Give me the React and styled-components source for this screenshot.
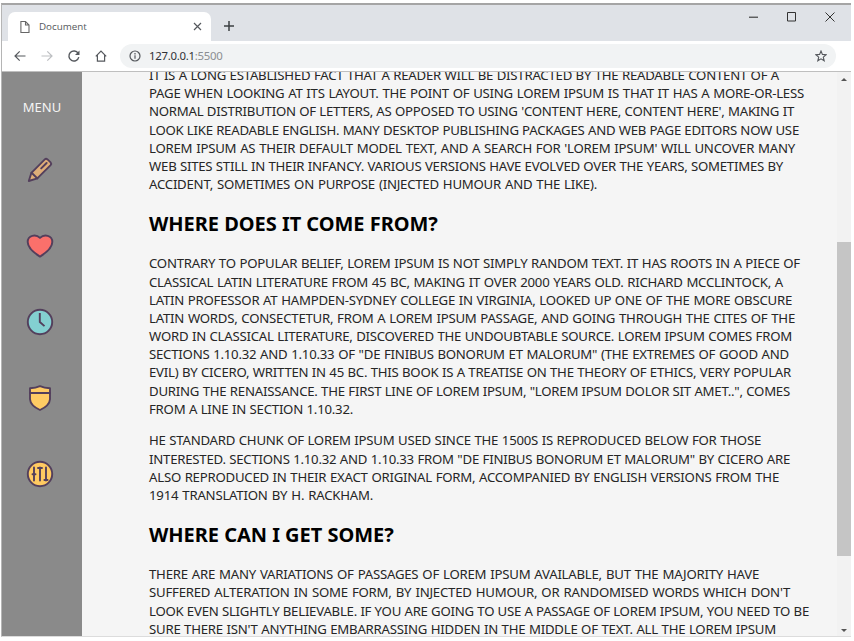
import React from "react";
import styled, { createGlobalStyle } from "styled-components";

const Global = createGlobalStyle`
  * { box-sizing: border-box; }
  body { margin: 0; background: #fff; font-family: "Noto Sans", "Open Sans", sans-serif; overflow: hidden; }
  svg { display: block; flex: none; }
`;

const Window = styled.div`
  width: 854px;
  height: 641px;
  padding: 3px 3px 4px 1px;
  background: #fff;
`;

const Browser = styled.div`
  display: flex;
  flex-direction: column;
  height: 634px;
  border-top: 2px solid #a5a5a5;
  border-left: 1px solid #b5b5b5;
  border-bottom: 1px solid #dcdcdc;
`;

const TabStrip = styled.header`
  display: flex;
  align-items: flex-end;
  height: 36px;
  flex: none;
  padding-left: 6px;
  background: #dfe2e7;
`;

const Tab = styled.div`
  display: flex;
  align-items: center;
  width: 203px;
  height: 29px;
  padding: 0 9px 0 10px;
  border-radius: 7px 7px 0 0;
  background: #fff;
`;

const TabTitle = styled.span`
  flex: 1;
  margin-left: 7px;
  font-family: "Open Sans", sans-serif;
  font-size: 9.8px;
  line-height: 14px;
  color: #55585c;
`;

const NewTab = styled.div`
  margin: 0 0 9px 12px;
`;

const WindowControls = styled.div`
  display: flex;
  align-items: center;
  gap: 28px;
  margin-left: auto;
  margin-right: 16px;
  height: 36px;
  padding-bottom: 12px;
`;

const Toolbar = styled.div`
  display: flex;
  align-items: center;
  height: 31px;
  flex: none;
  padding: 0 15px 1px 11px;
  border-bottom: 1px solid #bfbfbf;
  background: #fff;
`;

const NavButtons = styled.nav`
  display: flex;
  gap: 13px;
  width: 107px;
  flex: none;
`;

const AddressBar = styled.div`
  display: flex;
  flex: 1;
  align-items: center;
  height: 24px;
  padding: 0 9px 0 9px;
  border-radius: 12px;
  background: #f1f3f4;
`;

const Url = styled.span`
  flex: 1;
  margin-left: 8px;
  font-size: 11.4px;
  letter-spacing: -0.27px;
  line-height: 16px;
  color: #303236;
`;

const Port = styled.span`
  color: #8b8e92;
`;

const Viewport = styled.div`
  display: flex;
  flex: 1;
  min-height: 0;
  background: #f5f5f5;
`;

const Sidebar = styled.aside`
  display: flex;
  flex-direction: column;
  align-items: center;
  width: 80px;
  flex: none;
  padding: 25px 5px 0 0;
  background: #8a8a8a;
`;

const MenuLabel = styled.div`
  height: 20px;
  margin-left: 5px;
  font-size: 13px;
  line-height: 20px;
  color: #f5f5f5;
  margin-bottom: 39px;
`;

const MenuIcon = styled.div`
  height: 28px;
  margin-bottom: 48px;
`;

const Content = styled.main`
  flex: 1;
  min-width: 0;
  overflow: hidden;
  padding-left: 67px;
`;

const Paragraph = styled.div`
  margin: ${(p) => p.$top}px 0 0;
  font-size: 13.2px;
  line-height: 18.2px;
  color: #262626;
`;

const Line = styled.div`
  width: ${(p) => p.$width}px;
  height: 18.2px;
  white-space: nowrap;
  text-align: justify;
  text-align-last: justify;
  letter-spacing: -0.23px;
`;

const Heading = styled.h2`
  margin: 16.5px 0 0;
  height: 28px;
  font-size: 20px;
  line-height: 28px;
  font-weight: 700;
  white-space: nowrap;
  letter-spacing: -0.03px;
  color: #000;
`;

const Scrollbar = styled.div`
  display: flex;
  flex-direction: column;
  align-items: center;
  width: 14px;
  flex: none;
  padding: 6px 0 4px;
  background: #f2f2f2;
`;

const Thumb = styled.div`
  width: 14px;
  height: 314px;
  margin: 161px 0 auto;
  background: #c5c5c5;
`;

const Arrow = styled.div`
  width: 0;
  height: 0;
  border: 3px solid transparent;
  border-top-width: ${(p) => (p.$down ? 3 : 0)}px;
  border-bottom-width: ${(p) => (p.$down ? 0 : 3)}px;
  border-top-color: ${(p) => (p.$down ? "#555" : "transparent")};
  border-bottom-color: ${(p) => (p.$down ? "transparent" : "#555")};
`;

const Glyph = ({ size = 14, box = 14, color = "#55585d", weight = 1.2, children }) => (
  <svg width={size} height={size} viewBox={`0 0 ${box} ${box}`} fill="none" stroke={color} strokeWidth={weight}>
    {children}
  </svg>
);

const ink = "#533f5c";
const Art = ({ children }) => (
  <svg width="28" height="28" viewBox="0 0 28 28" stroke={ink} strokeWidth="1.9" strokeLinecap="round" strokeLinejoin="round" fill="none">
    {children}
  </svg>
);

const icons = [
  <Art key="pencil">
    <path d="M2.8 25 5.4 16.8 18.8 3.4Q20 2.2 21.5 3.4L24.6 6.4Q25.8 7.8 24.6 9.2L11.3 22.4Z" fill="#dfad78" />
    <path d="M5.6 16.8 11.3 22.4M15.2 12.4 20.6 7" strokeWidth="2" />
  </Art>,
  <Art key="heart">
    <path d="M14 24.6C9 21.5 1.7 15.5 1.7 10C1.7 3.2 9.8 1.8 14 5.9C18.2 1.8 26.3 3.2 26.3 10C26.3 15.5 19 21.5 14 24.6Z" fill="#fa706b" />
  </Art>,
  <Art key="clock">
    <circle cx="14" cy="14" r="12.2" fill="#83d0d1" />
    <path d="M13.8 6V14L17.8 17.5" strokeLinecap="square" />
  </Art>,
  <Art key="shield">
    <path d="M14 2.2Q18.3 4.1 24 4.2V15.2Q23.6 21.5 14 26Q4.4 21.5 4 15.2V4.2Q9.7 4.1 14 2.2Z" fill="#ffcb64" />
    <path d="M4 9H24" />
  </Art>,
  <Art key="sliders">
    <circle cx="14" cy="14" r="12.2" fill="#ffca61" />
    <path d="M8 7.5V20.5M14 7.5V20.5M20 7.5V20.5M6.5 14.2H9.5M12 8H16M18.4 20H21.6" />
  </Art>,
];

const established = [
  ["IT IS A LONG ESTABLISHED FACT THAT A READER WILL BE DISTRACTED BY THE READABLE CONTENT OF A", 630],
  ["PAGE WHEN LOOKING AT ITS LAYOUT. THE POINT OF USING LOREM IPSUM IS THAT IT HAS A MORE-OR-LESS", 655],
  ["NORMAL DISTRIBUTION OF LETTERS, AS OPPOSED TO USING 'CONTENT HERE, CONTENT HERE', MAKING IT", 645],
  ["LOOK LIKE READABLE ENGLISH. MANY DESKTOP PUBLISHING PACKAGES AND WEB PAGE EDITORS NOW USE", 650],
  ["LOREM IPSUM AS THEIR DEFAULT MODEL TEXT, AND A SEARCH FOR 'LOREM IPSUM' WILL UNCOVER MANY", 646],
  ["WEB SITES STILL IN THEIR INFANCY. VARIOUS VERSIONS HAVE EVOLVED OVER THE YEARS, SOMETIMES BY", 634],
  ["ACCIDENT, SOMETIMES ON PURPOSE (INJECTED HUMOUR AND THE LIKE).", 448],
];
const origin = [
  ["CONTRARY TO POPULAR BELIEF, LOREM IPSUM IS NOT SIMPLY RANDOM TEXT. IT HAS ROOTS IN A PIECE OF", 651],
  ["CLASSICAL LATIN LITERATURE FROM 45 BC, MAKING IT OVER 2000 YEARS OLD. RICHARD MCCLINTOCK, A", 634],
  ["LATIN PROFESSOR AT HAMPDEN-SYDNEY COLLEGE IN VIRGINIA, LOOKED UP ONE OF THE MORE OBSCURE", 643],
  ["LATIN WORDS, CONSECTETUR, FROM A LOREM IPSUM PASSAGE, AND GOING THROUGH THE CITES OF THE", 646],
  ["WORD IN CLASSICAL LITERATURE, DISCOVERED THE UNDOUBTABLE SOURCE. LOREM IPSUM COMES FROM", 643],
  ["SECTIONS 1.10.32 AND 1.10.33 OF \"DE FINIBUS BONORUM ET MALORUM\" (THE EXTREMES OF GOOD AND", 640],
  ["EVIL) BY CICERO, WRITTEN IN 45 BC. THIS BOOK IS A TREATISE ON THE THEORY OF ETHICS, VERY POPULAR", 642],
  ["DURING THE RENAISSANCE. THE FIRST LINE OF LOREM IPSUM, \"LOREM IPSUM DOLOR SIT AMET..\", COMES", 641],
  ["FROM A LINE IN SECTION 1.10.32.", 204],
];
const standard = [
  ["HE STANDARD CHUNK OF LOREM IPSUM USED SINCE THE 1500S IS REPRODUCED BELOW FOR THOSE", 612],
  ["INTERESTED. SECTIONS 1.10.32 AND 1.10.33 FROM \"DE FINIBUS BONORUM ET MALORUM\" BY CICERO ARE", 641],
  ["ALSO REPRODUCED IN THEIR EXACT ORIGINAL FORM, ACCOMPANIED BY ENGLISH VERSIONS FROM THE", 630],
  ["1914 TRANSLATION BY H. RACKHAM.", 224],
];
const variations = [
  ["THERE ARE MANY VARIATIONS OF PASSAGES OF LOREM IPSUM AVAILABLE, BUT THE MAJORITY HAVE", 610],
  ["SUFFERED ALTERATION IN SOME FORM, BY INJECTED HUMOUR, OR RANDOMISED WORDS WHICH DON'T", 641],
  ["LOOK EVEN SLIGHTLY BELIEVABLE. IF YOU ARE GOING TO USE A PASSAGE OF LOREM IPSUM, YOU NEED TO BE", 660],
  ["SURE THERE ISN'T ANYTHING EMBARRASSING HIDDEN IN THE MIDDLE OF TEXT. ALL THE LOREM IPSUM", 627],
];

const TextBlock = ({ lines, top }) => (
  <Paragraph $top={top}>
    {lines.map(([text, width]) => (
      <Line key={text} $width={width}>{text}</Line>
    ))}
  </Paragraph>
);

export default function App() {
  return (
    <Window>
      <Global />
      <Browser>
        <TabStrip>
          <Tab>
            <Glyph color="#666" weight={1.1}><path d="M2.9 1.5H7.5L11 5V12.5H2.9ZM7.5 1.5V5H11" /></Glyph>
            <TabTitle>Document</TabTitle>
            <Glyph size={9} box={9}><path d="M1 1 8 8M8 1 1 8" /></Glyph>
          </Tab>
          <NewTab>
            <Glyph size={12} box={12} color="#3d4043" weight={1.5}><path d="M6 1V11M1 6H11" /></Glyph>
          </NewTab>
          <WindowControls>
            <Glyph size={10} box={10} color="#333" weight={1.1}><path d="M0 5.2H9" /></Glyph>
            <Glyph size={10} box={10} color="#333" weight={1}><path d="M.5 .5H8.5V9H.5Z" /></Glyph>
            <Glyph size={10} box={10} color="#333" weight={1}><path d="M.5 .5 9.5 9.5M9.5 .5 .5 9.5" /></Glyph>
          </WindowControls>
        </TabStrip>
        <Toolbar>
          <NavButtons>
            <Glyph><path d="M12.5 7H2M6.7 2.3 2 7 6.7 11.7" /></Glyph>
            <Glyph color="#bdbfc2"><path d="M1.5 7H12M7.3 2.3 12 7 7.3 11.7" /></Glyph>
            <Glyph weight={1.4}><path d="M11.2 4.4A5 5 0 1 0 11.8 8.2" /><path d="M12.5 1.5V6H8Z" fill="#55585d" stroke="none" /></Glyph>
            <Glyph><path d="M1.8 7.4 7 2.1 12.2 7.4M3.4 6.3V12.2H10.6V6.3" /></Glyph>
          </NavButtons>
          <AddressBar>
            <Glyph size={12} box={12} weight={1.2}><circle cx="6" cy="6" r="5" /><path d="M6 5.3V8.8M6 3.1V4.4" /></Glyph>
            <Url>127.0.0.1<Port>:5500</Port></Url>
            <Glyph size={12} box={12} weight={1.1}><path d="M6 1 7.4 4.4 11.1 4.7 8.3 7.1 9.2 10.8 6 8.8 2.8 10.8 3.7 7.1 .9 4.7 4.6 4.4Z" /></Glyph>
          </AddressBar>
        </Toolbar>
        <Viewport>
          <Sidebar>
            <MenuLabel>MENU</MenuLabel>
            {icons.map((icon) => <MenuIcon key={icon.key}>{icon}</MenuIcon>)}
          </Sidebar>
          <Content>
            <TextBlock lines={established} top={-6} />
            <Heading>WHERE DOES IT COME FROM?</Heading>
            <TextBlock lines={origin} top={16.5} />
            <TextBlock lines={standard} top={13.4} />
            <Heading>WHERE CAN I GET SOME?</Heading>
            <TextBlock lines={variations} top={16.5} />
          </Content>
          <Scrollbar>
            <Arrow />
            <Thumb />
            <Arrow $down />
          </Scrollbar>
        </Viewport>
      </Browser>
    </Window>
  );
}
